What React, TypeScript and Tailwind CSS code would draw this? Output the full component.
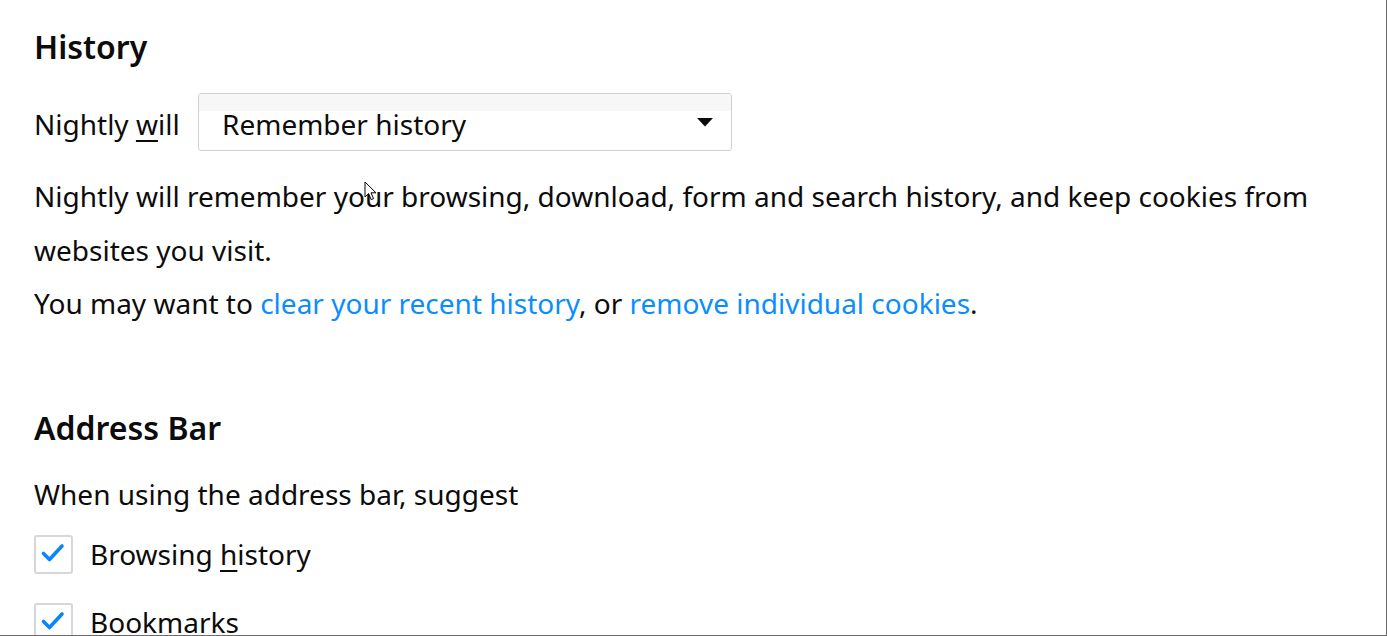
const FONT = { fontFamily: '"Noto Sans", "Open Sans", sans-serif' }

function Checkbox({ label, accessKey }: { label: string; accessKey?: string }) {
  const i = accessKey ? label.indexOf(accessKey) : -1
  return (
    <div className="flex h-[52.5px] items-center">
      <span className="flex h-[39px] w-[39px] items-center justify-center rounded-[3px] border-2 border-[#d7d7db] bg-white">
        <svg width="39" height="39" viewBox="0 0 39 39" className="shrink-0">
          <path d="M9.5 18.5 L15.5 24.5 L28 11" fill="none" stroke="#0a84ff" strokeWidth="3.6" strokeLinecap="round" strokeLinejoin="round" />
        </svg>
      </span>
      <span className="ml-[17px] leading-[52.5px]">
        {i < 0 ? (
          label
        ) : (
          <>
            {label.slice(0, i)}
            <u className="underline-offset-[5px]">{label[i]}</u>
            {label.slice(i + 1)}
          </>
        )}
      </span>
    </div>
  )
}

function Cursor() {
  return (
    <svg width="14" height="21" viewBox="0 0 14 21" className="pointer-events-none absolute left-[364px] top-[181px]">
      <path d="M1 1 L1 16 L4.6 12.6 L7.2 18.6 L9.6 17.6 L7 11.8 L12 11.8 Z" fill="#fff" stroke="#000" strokeWidth="1" strokeLinejoin="round" />
    </svg>
  )
}

export default function App() {
  return (
    <div
      style={FONT}
      className="relative h-[636px] w-[1387px] overflow-hidden border-r border-b border-[#6a6a6a] bg-white pl-[34px] pt-[27px] text-[28px] text-[#0c0c0d]"
    >
      <section>
        <h1 className="h-[40px] text-[32px] font-semibold leading-[40px]">History</h1>

        <div className="mt-[26px] flex items-center">
          <label className="w-[164px] pt-[4px] leading-[38px]">
            Nightly <u className="underline-offset-[5px]">w</u>ill
          </label>
          <div className="relative flex h-[58px] w-[534px] items-center justify-between overflow-hidden rounded-[3px] border border-[#cfcfd6] bg-white pl-[23px] pr-[18px]">
            <div className="absolute inset-x-0 top-0 h-[17px] bg-[#f7f7f8]" />
            <span className="relative pt-[4px] leading-[38px]">Remember history</span>
            <svg width="16" height="9" viewBox="0 0 16 9" className="relative">
              <path d="M0 0 H16 L8 8.5 Z" fill="#0c0c0d" />
            </svg>
          </div>
        </div>

        <div className="mt-[19px] leading-[53.5px]">
          <p>
            Nightly will remember your browsing, download, form and search history, and keep cookies from websites
            you visit.
          </p>
          <p>
            You may want to <a className="text-[#0a8dff]">clear your recent history</a>, or{' '}
            <a className="text-[#0a8dff]">remove individual cookies</a>.
          </p>
        </div>
      </section>

      <section className="mt-[77.5px]">
        <h1 className="h-[40px] text-[32px] font-semibold leading-[40px]">Address Bar</h1>
        <p className="mt-[20.3px] leading-[52.5px]">When using the address bar, suggest</p>
        <div className="mt-[7.5px] flex flex-col gap-[15px]">
          <Checkbox label="Browsing history" accessKey="h" />
          <Checkbox label="Bookmarks" />
        </div>
      </section>

      <Cursor />
    </div>
  )
}
